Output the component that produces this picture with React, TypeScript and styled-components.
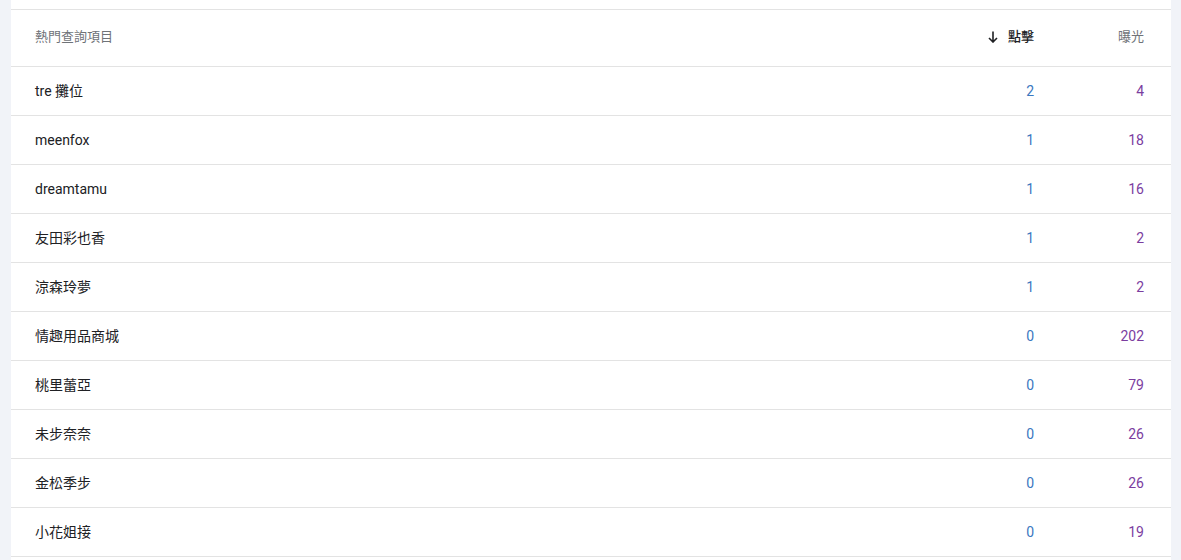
import { createGlobalStyle } from "styled-components";
import styled from "styled-components";

interface IQuery {
    query: string;
    clicks: number;
    impressions: number;
}

const rows: IQuery[] = [
    { query: "tre 攤位", clicks: 2, impressions: 4 },
    { query: "meenfox", clicks: 1, impressions: 18 },
    { query: "dreamtamu", clicks: 1, impressions: 16 },
    { query: "友田彩也香", clicks: 1, impressions: 2 },
    { query: "涼森玲夢", clicks: 1, impressions: 2 },
    { query: "情趣用品商城", clicks: 0, impressions: 202 },
    { query: "桃里蕾亞", clicks: 0, impressions: 79 },
    { query: "未步奈奈", clicks: 0, impressions: 26 },
    { query: "金松季步", clicks: 0, impressions: 26 },
    { query: "小花姐接", clicks: 0, impressions: 19 },
];

const pageColor = "#f1f3f8";
const lineColor = "#e3e3e3";
const clickColor = "#3b78bf";
const impColor = "#7b3d9f";

const GlobalStyle = createGlobalStyle`
  html, body {
    margin: 0;
    background: ${pageColor};
    font-family: Roboto, "Noto Sans CJK TC", "Noto Sans", sans-serif;
    -webkit-font-smoothing: antialiased;
  }
`;

const Card = styled.div`
  margin: 0 10px 0 11px;
  background: #fff;
  padding-top: 9px;
  height: 560px;
  box-sizing: border-box;
  overflow: hidden;
`;

const Table = styled.div`
  border-top: 1px solid ${lineColor};
`;

const Row = styled.div<{ $head?: boolean }>`
  display: grid;
  grid-template-columns: 1fr 110px 110px;
  align-items: center;
  box-sizing: border-box;
  height: ${({ $head }) => ($head ? "57px" : "49px")};
  padding: 0 27px ${({ $head }) => ($head ? "3px" : "1px")} 24px;
  border-bottom: 1px solid ${lineColor};
  font-size: ${({ $head }) => ($head ? "13px" : "14px")};
  line-height: 18px;
`;

const HeadCell = styled.div<{ $active?: boolean; $right?: boolean }>`
  display: flex;
  align-items: center;
  justify-content: ${({ $right }) => ($right ? "flex-end" : "flex-start")};
  gap: 10px;
  color: ${({ $active }) => ($active ? "#202124" : "#6f7378")};
  font-weight: ${({ $active }) => ($active ? 500 : 400)};
`;

const QueryCell = styled.div`
  color: #202124;
`;

const NumCell = styled.div<{ $tone: string }>`
  text-align: right;
  color: ${({ $tone }) => $tone};
`;

const SortArrow = () => (
    <svg width="10" height="12" viewBox="0 0 10 12" fill="none">
        <path d="M5 0.5V11M1 7l4 4 4-4" stroke="#202124" strokeWidth="1.6" />
    </svg>
);

export default function App() {
    return (
        <>
            <GlobalStyle />
            <Card>
                <Table>
                    <Row $head>
                        <HeadCell>熱門查詢項目</HeadCell>
                        <HeadCell $right $active>
                            <SortArrow />
                            點擊
                        </HeadCell>
                        <HeadCell $right>曝光</HeadCell>
                    </Row>
                    {rows.map((r) => (
                        <Row key={r.query}>
                            <QueryCell>{r.query}</QueryCell>
                            <NumCell $tone={clickColor}>{r.clicks}</NumCell>
                            <NumCell $tone={impColor}>{r.impressions}</NumCell>
                        </Row>
                    ))}
                </Table>
            </Card>
        </>
    );
}
